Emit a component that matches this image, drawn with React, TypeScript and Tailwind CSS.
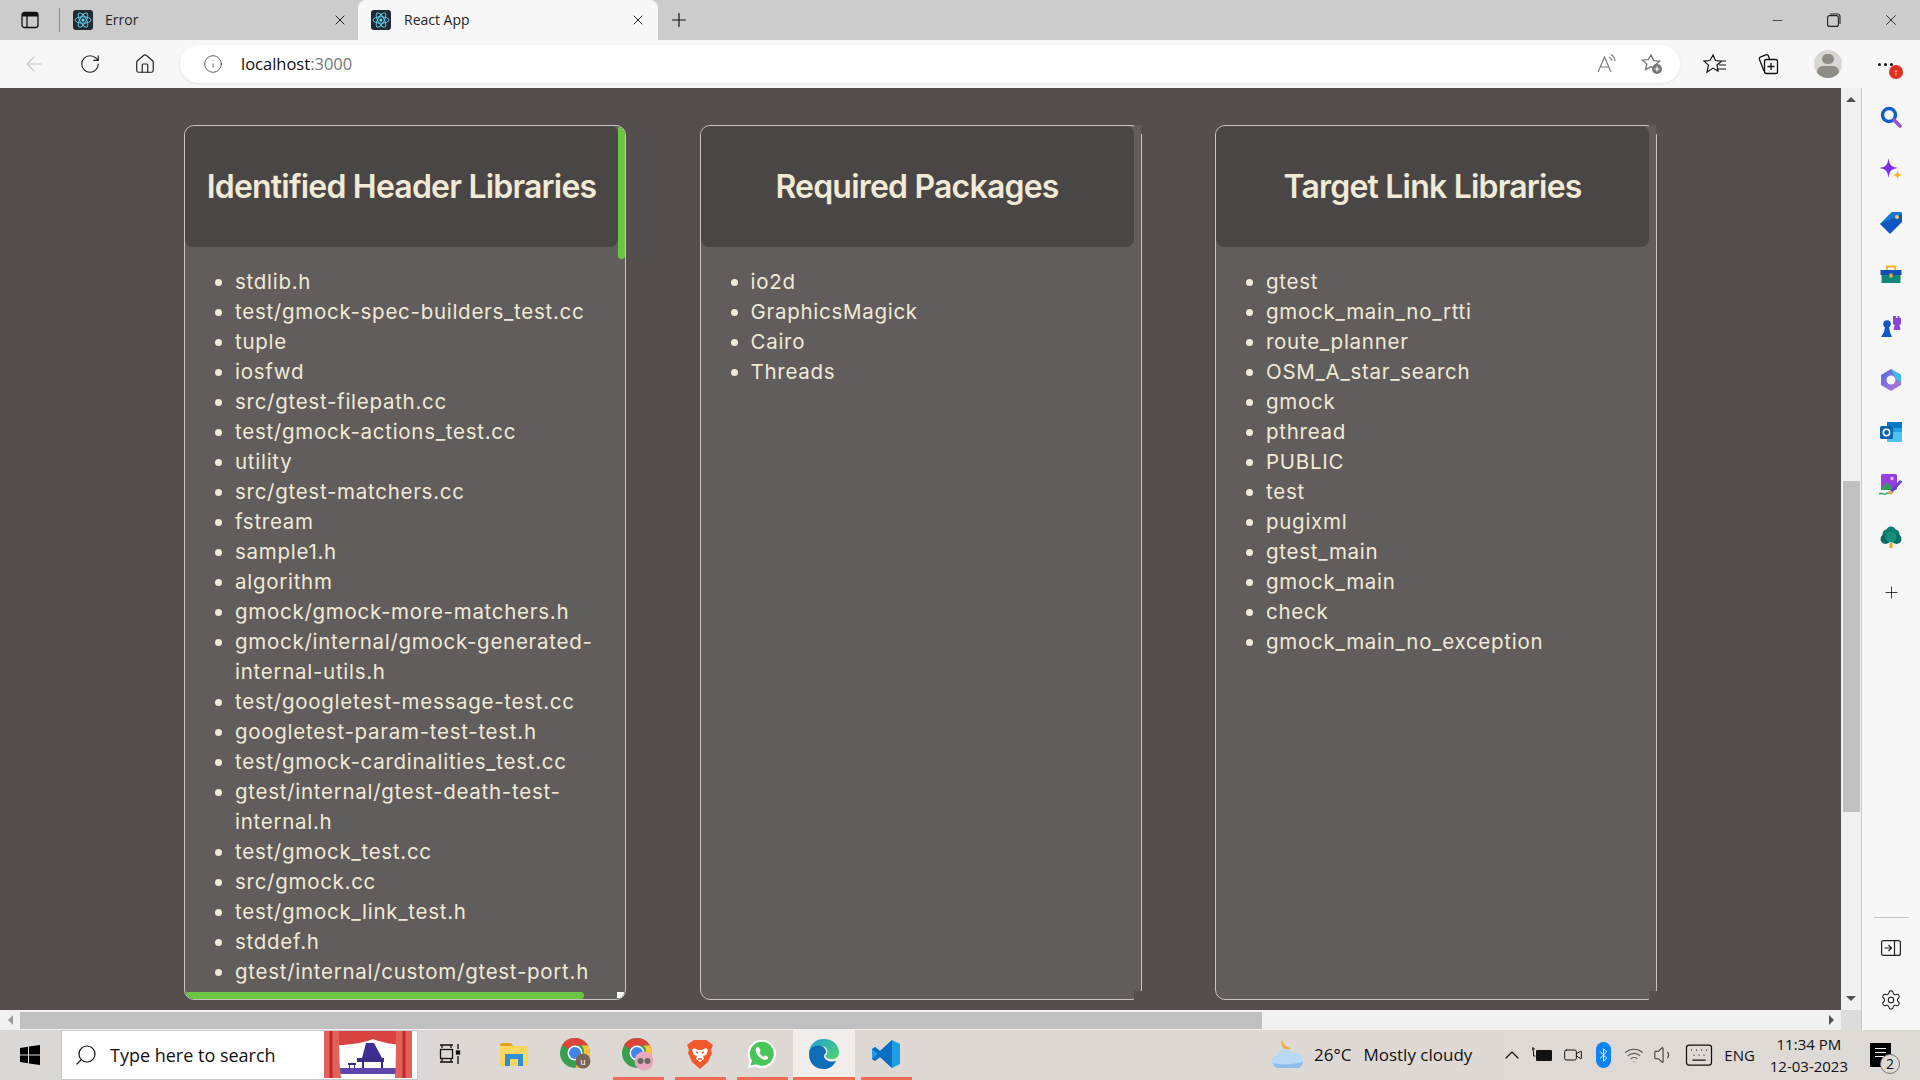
import React from "react";
import { ArrowLeft, RotateCw, Home, Info, Plus, X, Minus, Settings, Search, ChevronUp, Volume1, Wifi, Keyboard, Video, Bluetooth } from "lucide-react";

const ReactIcon = () => (
  <svg width="20" height="20" viewBox="0 0 20 20">
    <rect width="20" height="20" rx="3" fill="#23272f" />
    <g fill="none" stroke="#61dafb" strokeWidth="0.9">
      <ellipse cx="10" cy="10" rx="8" ry="3.2" />
      <ellipse cx="10" cy="10" rx="8" ry="3.2" transform="rotate(60 10 10)" />
      <ellipse cx="10" cy="10" rx="8" ry="3.2" transform="rotate(120 10 10)" />
    </g>
    <circle cx="10" cy="10" r="1.6" fill="#61dafb" />
  </svg>
);

const headers = [
  "stdlib.h",
  "test/gmock-spec-builders_test.cc",
  "tuple",
  "iosfwd",
  "src/gtest-filepath.cc",
  "test/gmock-actions_test.cc",
  "utility",
  "src/gtest-matchers.cc",
  "fstream",
  "sample1.h",
  "algorithm",
  "gmock/gmock-more-matchers.h",
  "gmock/internal/gmock-generated-internal-utils.h",
  "test/googletest-message-test.cc",
  "googletest-param-test-test.h",
  "test/gmock-cardinalities_test.cc",
  "gtest/internal/gtest-death-test-internal.h",
  "test/gmock_test.cc",
  "src/gmock.cc",
  "test/gmock_link_test.h",
  "stddef.h",
  "gtest/internal/custom/gtest-port.h",
  "gmock/gmock.h",
];
const packages = ["io2d", "GraphicsMagick", "Cairo", "Threads"];
const links = [
  "gtest",
  "gmock_main_no_rtti",
  "route_planner",
  "OSM_A_star_search",
  "gmock",
  "pthread",
  "PUBLIC",
  "test",
  "pugixml",
  "gtest_main",
  "gmock_main",
  "check",
  "gmock_main_no_exception",
];

function Card({ title, items, scroll }: { title: string; items: string[]; scroll?: boolean }) {
  return (
    <div className="relative h-[875px] w-[442px] shrink-0">
      <div className="relative h-full w-full overflow-hidden rounded-[10px] border border-[#c9c6c2] bg-[#625d5d]">
        <div className="flex h-[121px] w-[433px] items-center justify-center rounded-[8px] bg-[#4a4646]">
          <h2 className="whitespace-nowrap text-[32px] font-semibold leading-none tracking-[-0.8px] text-[#f0ead6]">{title}</h2>
        </div>
        <ul className="mt-[20px] ml-[50px] w-[370px] list-disc text-[20.5px] leading-[30px] tracking-[0.72px] text-[#f0ead6]">
          {items.map((t) => (
            <li key={t}>{t}</li>
          ))}
        </ul>
        {scroll && (
          <>
            <div className="absolute right-0 top-0 h-[133px] w-[7px] rounded-[3px] bg-[#6ac542]" />
            <div className="absolute bottom-0 left-0 h-[7px] w-[399px] rounded-[4px] bg-[#6ac542]" />
            <div className="absolute bottom-[1px] right-[1px] h-[6px] w-[7px] bg-white" />
          </>
        )}
      </div>
      {!scroll && (
        <>
          <div className="absolute right-0 top-0 h-[9px] w-[8px] border-r border-[#544e4e] bg-[#625d5d]" />
          <div className="absolute bottom-0 right-0 h-[9px] w-[8px] bg-[#544e4e]" />
        </>
      )}
    </div>
  );
}

const side: React.ReactNode[] = [
  <svg width="24" height="24" viewBox="0 0 24 24"><circle cx="10" cy="10" r="6.5" fill="none" stroke="#0f5ec9" strokeWidth="3.4" /><path d="M15 15l6 6" stroke="#9a4fd6" strokeWidth="3.6" strokeLinecap="round" /></svg>,
  <svg width="24" height="24" viewBox="0 0 24 24"><path d="M9.500 0c1 7 2.500 9 9.500 10-7 1-8.500 3-9.500 10C8.500 13 7 11 0 10c7-1 8.500-3 9.500-10z" fill="#7b2ff2" /><path d="M18.500 12.500c.5 3 1.200 3.700 5 4.500-3.800.8-4.500 1.500-5 5-.5-3.500-1.200-4.200-5-5 3.800-.8 4.500-1.500 5-4.500z" fill="#f5b52e" /></svg>,
  <svg width="24" height="24" viewBox="0 0 24 24"><path d="M1 14L13 2h8a2 2 0 0 1 2 2v8L11 24z" fill="#0f58c4" /><path d="M13 2h8a2 2 0 0 1 2 2L1 14z" fill="#1f8ce0" opacity="0.6" /><circle cx="18" cy="7" r="2" fill="#f7c948" /></svg>,
  <svg width="24" height="24" viewBox="0 0 24 24"><path d="M8 7V3.500h8V7" fill="none" stroke="#f0b429" strokeWidth="1.800" /><rect x="1.500" y="7" width="21" height="5" fill="#0f4fb3" /><rect x="2.500" y="12" width="19" height="8" fill="#11877a" /><rect x="10.500" y="10.500" width="3" height="4" fill="#f0b429" /></svg>,
  <svg width="24" height="24" viewBox="0 0 24 24"><path d="M15 1h2v2h1.500V1h2v2H22v6l-1.500 1 1 5h-7l1-5-1.500-1V1z" fill="#8e44d8" /><circle cx="8" cy="9" r="3.800" fill="#1357c5" /><path d="M6 12h4l1 5 2 5H2l3-5z" fill="#1357c5" /></svg>,
  <svg width="24" height="24" viewBox="0 0 24 24"><defs><linearGradient id="ms" x1="0" y1="0" x2="1" y2="1"><stop offset="0" stopColor="#3f6fd8" /><stop offset="0.5" stopColor="#8d6fe0" /><stop offset="1" stopColor="#b57ad8" /></linearGradient></defs><path d="M12 1l10 6v10l-10 6-10-6V7z" fill="url(#ms)" /><path d="M12 1l10 6v7l-5-3z" fill="#38bdf0" /><circle cx="12" cy="12" r="4.500" fill="#f7f7f7" /></svg>,
  <svg width="24" height="24" viewBox="0 0 24 24"><rect x="8" y="2" width="15" height="20" rx="1.500" fill="#1ea4e6" /><rect x="8" y="2" width="15" height="6" fill="#0a78c8" /><path d="M8 12l15 0v10H8z" fill="#4cc3f2" /><rect x="1" y="6" width="13" height="13" rx="1.500" fill="#0c64b5" /><circle cx="7.500" cy="12.500" r="3.200" fill="none" stroke="#fff" strokeWidth="1.600" /></svg>,
  <svg width="26" height="24" viewBox="0 0 26 24"><rect x="3" y="1" width="16" height="16" rx="1.500" fill="#9a3de0" /><path d="M3 16l6-7 7 8H3z" fill="#2aa05a" /><circle cx="14" cy="5.500" r="1.700" fill="#e9b8f5" /><path d="M12 18L22 7l2.500 1.500L14 20z" fill="#5a40d8" /><path d="M1 21c3-2 5 2 8-1 1 0 2 1 4 0" fill="none" stroke="#1f9d55" strokeWidth="1.300" /><circle cx="12.500" cy="19.500" r="2" fill="#eba52b" /></svg>,
  <svg width="24" height="24" viewBox="0 0 24 24"><circle cx="12" cy="6.500" r="5" fill="#0e7c70" /><circle cx="8" cy="9" r="4.500" fill="#0e7c70" /><circle cx="16" cy="9" r="4.500" fill="#0e7c70" /><circle cx="6.500" cy="14" r="5" fill="#0b6b62" /><circle cx="17.500" cy="14" r="5" fill="#0b6b62" /><circle cx="12" cy="12" r="5.500" fill="#15907a" /><rect x="10.500" y="18" width="3" height="5" fill="#eba52b" /></svg>,
];

const Chrome = ({ badge }: { badge: React.ReactNode }) => (
  <svg width="32" height="32" viewBox="0 0 32 32" className="overflow-visible">
    <circle cx="15" cy="15" r="15" fill="#37a04f" />
    <path d="M15 0a15 15 0 0 1 13 7.500H15a7.500 7.500 0 0 0-6.500 3.800L2 7A15 15 0 0 1 15 0z" fill="#df4439" />
    <path d="M28 7.500A15 15 0 0 1 15 30l6.500-11.300a7.500 7.500 0 0 0 0-11.200z" fill="#f6c33b" />
    <circle cx="15" cy="15" r="7.500" fill="#fff" />
    <circle cx="15" cy="15" r="6" fill="#3f85ec" />
    {badge}
  </svg>
);

const apps: React.ReactNode[] = [
  <svg width="22" height="22" viewBox="0 0 22 22" fill="none" stroke="#111" strokeWidth="1.300" className="mr-[4px]"><path d="M1 2h13M1 19h13M3 2v3M12 2v3M3 16v3M12 16v3" /><rect x="1.500" y="6.500" width="12" height="9" /><path d="M19 1v5M19 13v8" /><rect x="17.500" y="8" width="3" height="3" fill="#111" /></svg>,
  <svg width="28" height="24" viewBox="0 0 28 24"><path d="M0 3a2 2 0 0 1 2-2h9l2 3H0z" fill="#e3a21a" /><rect x="0" y="4" width="28" height="20" rx="1" fill="#fbd75f" /><path d="M5 24V12h18v12h-5v-7h-8v7z" fill="#2d8fd6" /></svg>,
  <Chrome badge={<><circle cx="23" cy="23" r="7.500" fill="#7b6458" /><text x="23" y="26.500" fontSize="9" textAnchor="middle" fill="#fff" fontFamily="Liberation Sans">u</text></>} />,
  <Chrome badge={<><circle cx="22" cy="23" r="9.500" fill="#eaa7c0" /><circle cx="18.500" cy="23" r="3" fill="#6a6a62" /><circle cx="25.500" cy="23" r="3" fill="#6a6a62" /></>} />,
  <svg width="26" height="30" viewBox="0 0 26 30"><path d="M7 1h12l3 2 4 3-2 5 1 3-4 9-8 7-8-7-4-9 1-3-2-5 4-3z" fill="#f1592a" /><path d="M7 9l4 2h4l4-2 2 2-2 5-3 1 1 3-4 3-4-3 1-3-3-1-2-5z" fill="#fff" /><path d="M9 13l2 1M17 13l-2 1M11 20h4" stroke="#f1592a" strokeWidth="1.400" fill="none" /></svg>,
  <svg width="30" height="30" viewBox="0 0 30 30"><path d="M0.500 29.500l2-7.500A14.200 14.200 0 1 1 8 27.400z" fill="#fff" /><path d="M3.500 26.500l1.400-5A12 12 0 1 1 9 25.200z" fill="#45c657" /><path d="M10.500 8c-2 1-2.500 3-1.200 6 1.500 3 4 5.500 7 6.500 2.500.8 4.500-.2 5-2.300l-3-2-1.500 1.500c-2-.8-3.500-2.300-4.400-4.300l1.300-1.500-1.500-3.400z" fill="#fff" /></svg>,
  <svg width="30" height="30" viewBox="0 0 30 30"><defs><linearGradient id="eg" x1="0" y1="0" x2="1" y2="1"><stop offset="0" stopColor="#1e9fd8" /><stop offset="1" stopColor="#56d56a" /></linearGradient></defs><path d="M15 0c9 0 15 6 15 14 0 4-3.500 6-7 6-4 0-6.500-1.500-6.500-3 0-1 2-1 2-4 0-4-3-6-7-6C6 7 1 11 0 15 0 6 6 0 15 0z" fill="url(#eg)" /><path d="M0 15c0-5 4-8.500 9-8.500 5.500 0 8 3.500 8 6.500 0 1.500-2 2-2 4 0 3.500 4 5.500 8 5.500 1.500 0 3-.3 4-.8C24 28 19.500 30 15 30 6 30 0 24 0 15z" fill="#0f6cb8" /></svg>,
  <svg width="30" height="30" viewBox="0 0 30 30"><path d="M21 1l8 4v20l-8 4-12-11-5 4-3-2v-10l3-2 5 4z" fill="#1d9fe6" /><path d="M21 1v28L9 18l-5 4-3-2 6-5-6-5 3-2 5 4z" fill="#0a6fc2" /></svg>,
];

const Weather = () => (
  <svg width="32" height="34" viewBox="0 0 32 34">
    <path d="M10 1a9 9 0 0 0 4 11 8 8 0 0 0 5-2A9 9 0 0 1 10 1z" fill="#f0a92e" />
    <path d="M6 30a6 6 0 0 1-1-12 8 8 0 0 1 15-3 7.500 7.500 0 0 1 6 15z" fill="#b8d8f5" />
    <path d="M6 30a6 6 0 0 1-5-5c6 2 20 2 30-1a7 7 0 0 1-5 6z" fill="#8fbdeb" />
  </svg>
);

export default function App() {
  const ui = "font-['Open_Sans','Noto_Sans',sans-serif]";
  return (
    <div className={`flex h-[1080px] w-[1920px] flex-col overflow-hidden bg-[#f7f7f7] ${ui}`}>
      {/* tab strip */}
      <div className="flex h-[40px] shrink-0 bg-[#cccccc] text-[14px] text-[#222]">
        <div className="flex w-[59px] items-center justify-center">
          <svg width="18" height="18" viewBox="0 0 18 18"><rect x="1" y="1.500" width="16" height="15" rx="2.500" fill="none" stroke="#111" strokeWidth="1.300" /><path d="M1 5.500V4a2.500 2.500 0 0 1 2.500-2.500h11A2.500 2.500 0 0 1 17 4v1.500z" fill="#111" /><path d="M6 5v11" stroke="#111" strokeWidth="1.300" /></svg>
        </div>
        <div className="my-[8px] w-px bg-[#8c8c8c]" />
        <div className="flex w-[298px] items-center pl-[13px] pr-[10px]">
          <ReactIcon />
          <span className="ml-[12px] flex-1 pb-[2px]">Error</span>
          <X size={16} strokeWidth={1.400} color="#111" />
        </div>
        <div className="flex w-[300px] items-center rounded-t-[8px] bg-[#f7f7f7] pl-[13px] pr-[12px]">
          <ReactIcon />
          <span className="ml-[13px] flex-1 pb-[2px]">React App</span>
          <X size={16} strokeWidth={1.400} color="#111" />
        </div>
        <div className="flex w-[42px] items-center justify-center"><Plus size={22} strokeWidth={1.300} color="#111" /></div>
        <div className="flex-1" />
        <div className="mr-[2px] flex w-[54px] items-center justify-center"><Minus size={15} strokeWidth={1.200} color="#222" /></div>
        <div className="flex w-[56px] items-center justify-center">
          <svg width="14" height="14" viewBox="0 0 14 14" fill="none" stroke="#222" strokeWidth="1.100"><rect x="0.600" y="2.600" width="10.800" height="10.800" rx="2" /><path d="M3 1h7.500A2.500 2.500 0 0 1 13 3.500V11" /></svg>
        </div>
        <div className="flex w-[58px] items-center justify-center"><X size={18} strokeWidth={1.200} color="#222" /></div>
      </div>

      {/* toolbar */}
      <div className="flex h-[48px] shrink-0 items-center bg-[#f7f7f7]">
        <div className="flex w-[62px] justify-center pl-[6px]"><ArrowLeft size={24} strokeWidth={1.100} color="#c9c9c9" /></div>
        <div className="flex w-[55px] justify-center"><RotateCw size={22} strokeWidth={1.300} color="#222" /></div>
        <div className="flex w-[56px] justify-center"><Home size={22} strokeWidth={1.300} color="#222" /></div>
        <div className="ml-[7px] flex h-[38px] w-[1500px] items-center rounded-full bg-white pl-[23px] shadow-[0_1px_3px_rgba(0,0,0,0.08)]">
          <Info size={20} strokeWidth={1.100} color="#555" />
          <span className="ml-[18px] flex-1 text-[16.500px] text-[#111]">localhost<span className="text-[#777]">:3000</span></span>
          <svg width="20" height="20" viewBox="0 0 20 20" fill="none" stroke="#777" strokeWidth="1.100" className="mr-[24px]"><path d="M1 18L7.500 3 14 18M3.500 13h8M12 3a5 5 0 0 1 3 4M14 0.500a8 8 0 0 1 4 6.500" /></svg>
          <svg width="22" height="22" viewBox="0 0 22 22" className="mr-[17px]"><path d="M10 2l2.500 5.500 6 .6-4.500 4 1 4-5-2.500-5.500 3 1.300-5.500-4.500-4 6-.6z" fill="none" stroke="#666" strokeWidth="1.200" /><circle cx="16" cy="16" r="5" fill="#777" /><path d="M16 13.500v5M13.500 16h5" stroke="#fff" strokeWidth="1.200" /></svg>
        </div>
        <div className="flex w-[55px] justify-center pl-[15px]">
          <svg width="24" height="22" viewBox="0 0 24 22" fill="none" stroke="#111" strokeWidth="1.200"><path d="M10 2l2.500 5.500 6 .6-4.500 4 1 6-5-3-6 4 1.500-7-4.500-4 6-.6zM15 8h8M16 12h7M15 16h8" /></svg>
        </div>
        <div className="flex w-[56px] justify-center pl-[10px]">
          <svg width="22" height="22" viewBox="0 0 22 22" fill="none" stroke="#111" strokeWidth="1.300"><path d="M7 18L2.500 6.500a2 2 0 0 1 1.200-2.600L9 1.800a2 2 0 0 1 2.500 1.200l1 3" /><rect x="7.500" y="6.500" width="13" height="14" rx="2" /><path d="M14 10v7M10.500 13.500h7" /></svg>
        </div>
        <div className="ml-[23px] flex h-[28px] w-[28px] shrink-0 flex-col items-center overflow-hidden rounded-full bg-[#d8d6d2]">
          <div className="mt-[4px] h-[12px] w-[12px] rounded-full bg-[#8f8c86]" />
          <div className="mt-[2px] h-[14px] w-[22px] rounded-full bg-[#8f8c86]" />
        </div>
        <div className="relative ml-[36px] flex gap-[3px]">
          <div className="h-[3px] w-[3px] rounded-full bg-[#111]" />
          <div className="h-[3px] w-[3px] rounded-full bg-[#111]" />
          <div className="h-[3px] w-[3px] rounded-full bg-[#111]" />
          <div className="absolute left-[11px] top-[2px] flex h-[14px] w-[14px] items-center justify-center rounded-full bg-[#df2f22] text-[10px] font-bold leading-none text-white">↑</div>
        </div>
      </div>

      {/* middle */}
      <div className="flex min-h-0 flex-1">
        <div className="flex w-[1862px] shrink-0 flex-col border-r border-[#c8c8c8]">
          <div className="flex h-[922px] shrink-0">
            <main className="flex h-full w-[1841px] shrink-0 gap-[73.500px] overflow-hidden bg-[#544e4e] pl-[184px] pt-[37px] font-['Inter',sans-serif]">
              <Card title="Identified Header Libraries" items={headers} scroll />
              <Card title="Required Packages" items={packages} />
              <Card title="Target Link Libraries" items={links} />
            </main>
            <div className="flex w-[20px] shrink-0 flex-col items-center bg-[#f1f1f1]">
              <div className="mt-[9px] h-0 w-0 border-x-[5px] border-b-[5px] border-x-transparent border-b-[#505050]" />
              <div className="mt-[379px] h-[331px] w-[17px] bg-[#c0c0c0]" />
              <div className="mt-[184px] h-0 w-0 border-x-[5px] border-t-[5px] border-x-transparent border-t-[#505050]" />
            </div>
          </div>
          <div className="flex h-[20px] shrink-0 items-center bg-[#f1f1f1]">
            <div className="ml-[8px] h-0 w-0 border-y-[5px] border-r-[5px] border-y-transparent border-r-[#999]" />
            <div className="ml-[7px] h-[17px] w-[1242px] bg-[#c0c0c0]" />
            <div className="ml-[567px] h-0 w-0 border-y-[5px] border-l-[5px] border-y-transparent border-l-[#505050]" />
            <div className="ml-[7px] h-full flex-1 bg-[#dcdcdc]" />
          </div>
        </div>
        <aside className="flex w-[58px] shrink-0 flex-col items-center bg-[#f7f7f7] pt-[3px]">
          {side.map((n, i) => (
            <div key={i} className="flex h-[52.500px] w-full items-center justify-center">{n}</div>
          ))}
          <div className="mt-[3px] flex h-[52.500px] w-full items-center justify-center"><Plus size={19} strokeWidth={1.100} color="#222" /></div>
          <div className="mt-[298px] h-px w-[35px] bg-[#c4c4c4]" />
          <svg width="20" height="16" viewBox="0 0 20 16" fill="none" stroke="#222" strokeWidth="1.200" className="mt-[22px]"><rect x="0.600" y="0.600" width="18.800" height="14.800" rx="2" /><path d="M13.500 1v14M3.500 8h7M7.500 5l3 3-3 3" /></svg>
          <Settings size={22} strokeWidth={1.200} color="#222" className="mt-[33px]" />
        </aside>
      </div>

      {/* taskbar */}
      <div className="flex h-[50px] shrink-0 items-center bg-[linear-gradient(90deg,#dcd8d6,#dfd8d4_50%,#dedad6)] text-[#111]">
        <div className="flex w-[60px] justify-center">
          <svg width="20" height="20" viewBox="0 0 20 20" fill="#000"><path d="M0 3l8-1.200v7.700H0zM9 1.600L20 0v9.500H9zM0 10.500h8v7.700L0 17zM9 10.500h11V20L9 18.400z" /></svg>
        </div>
        <div className="ml-[1px] flex h-full w-[357px] items-center overflow-hidden border border-[#c9c9c9] bg-white pl-[12px]">
          <Search size={24} strokeWidth={1.200} color="#111" className="-scale-x-100" />
          <span className="ml-[12px] text-[18px]">Type here to search</span>
          <svg width="94" height="50" viewBox="0 0 94 50" className="ml-auto shrink-0">
            <rect width="94" height="50" fill="#fff" />
            <rect x="16" y="38" width="58" height="6" fill="#5d47a8" />
            <path d="M39 28l4-15h8l8 15z" fill="#3f2f92" />
            <path d="M34 28h27v4H34zM39 32h2v6h-2zM58 32h2v6h-2zM25 33h8v2h-8zM26 35h1v3h-1zM31 35h1v3h-1z" fill="#3b2b85" />
            <path d="M1 0h88v16C78 15 62 14 50 9 38 14 22 15 1 16z" fill="#d8433f" />
            <path d="M1 0h15c0 18 0 34 2 48H1zM73 0h16v48H72c1-15 1-32 1-48z" fill="#e4605a" />
            <path d="M8 0v48M81 0v48" stroke="#bf2a28" strokeWidth="3" />
          </svg>
        </div>
        <div className="w-[3px] shrink-0" />
        {apps.map((a, i) => (
          <div key={i} className={`flex h-full w-[62px] shrink-0 flex-col items-center ${i === 6 ? "bg-[#f1edeb]" : ""}`}>
            <div className="flex flex-1 items-center justify-center">{a}</div>
            <div className={`h-[3px] ${i === 6 ? "w-full bg-[#ee6d54]" : i > 2 ? "w-[51px] bg-[#ee6d54]" : "w-[51px]"}`} />
          </div>
        ))}
        <div className="ml-[355px] flex items-center">
          <Weather />
          <span className="ml-[10px] text-[17px]">26°C</span>
          <span className="ml-[12px] text-[17px]">Mostly cloudy</span>
        </div>
        <ChevronUp size={24} strokeWidth={1.200} className="ml-[28px]" />
        <svg width="22" height="18" viewBox="0 0 22 18" className="ml-[7px]"><rect x="5" y="4" width="16" height="11" rx="1" fill="#111" /><path d="M1 3h3M2 1v4M2.500 5v5h2" stroke="#111" fill="none" /></svg>
        <Video size={20} strokeWidth={1.200} className="ml-[10px]" />
        <div className="ml-[13px] flex h-[26px] w-[15px] items-center justify-center rounded-full bg-[#0a84f5]"><Bluetooth size={16} color="#fff" strokeWidth={1.500} /></div>
        <Wifi size={20} strokeWidth={1.300} color="#555" className="ml-[13px]" />
        <Volume1 size={22} strokeWidth={1.100} color="#333" className="ml-[9px]" />
        <Keyboard size={30} strokeWidth={1} className="ml-[9px]" />
        <span className="ml-[10px] text-[15px]">ENG</span>
        <div className="ml-[13px] flex w-[82px] flex-col items-center text-[15px] leading-[22px]">
          <span>11:34 PM</span>
          <span>12-03-2023</span>
        </div>
        <div className="relative ml-[20px] h-[24px] w-[21px] bg-black">
          <div className="mx-[5px] mt-[5px] h-px bg-white" />
          <div className="mx-[5px] mt-[3px] h-px bg-white" />
          <div className="mx-[5px] mt-[3px] h-px bg-white" />
          <div className="absolute left-[10px] top-[11px] flex h-[20px] w-[20px] items-center justify-center rounded-full border border-[#777] bg-[#dedad6] text-[14px] leading-none">2</div>
        </div>
      </div>
    </div>
  );
}
